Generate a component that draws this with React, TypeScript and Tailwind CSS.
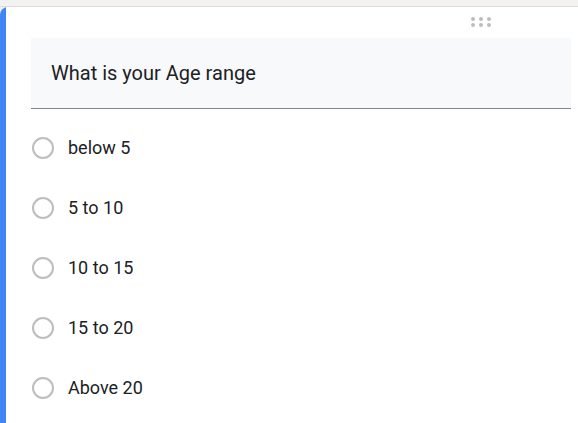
import React from "react";

const options = ["below 5", "5 to 10", "10 to 15", "15 to 20", "Above 20"];

export default function App() {
  return (
    <div
      className="w-[578px] h-[423px] overflow-hidden bg-[#f3f2f1] pt-[6px]"
      style={{ fontFamily: "Roboto, 'Noto Sans', sans-serif" }}
    >
      <div className="h-full border-t border-[#dadce0]">
        <div className="flex h-full bg-white rounded-tl-[8px] overflow-hidden">
          <div className="w-[6px] shrink-0 bg-[#4285f4]" />
          <div className="flex-1 flex flex-col pl-[25px] pr-[7px]">
            <div className="flex pt-[10px] pl-[440px]">
              <div className="grid grid-cols-3 gap-x-[4px] gap-y-[2px]">
                {Array.from({ length: 6 }).map((_, i) => (
                  <div key={i} className="w-[4px] h-[4px] rounded-full bg-[#bdbdbd]" />
                ))}
              </div>
            </div>
            <div className="mt-[11px] h-[71px] bg-[#f8f9fa] border-b border-[#80868b] flex items-center pl-[20px]">
              <span className="text-[20px] text-[#202124] leading-none">What is your Age range</span>
            </div>
            <div className="mt-[9px] flex flex-col">
              {options.map((o) => (
                <div key={o} className="h-[60px] flex items-center pl-[1px]">
                  <div className="w-[22px] h-[22px] rounded-full border-2 border-[#bdbdbd] shrink-0" />
                  <span className="ml-[14px] text-[18px] text-[#202124] leading-none">{o}</span>
                </div>
              ))}
            </div>
          </div>
        </div>
      </div>
    </div>
  );
}
